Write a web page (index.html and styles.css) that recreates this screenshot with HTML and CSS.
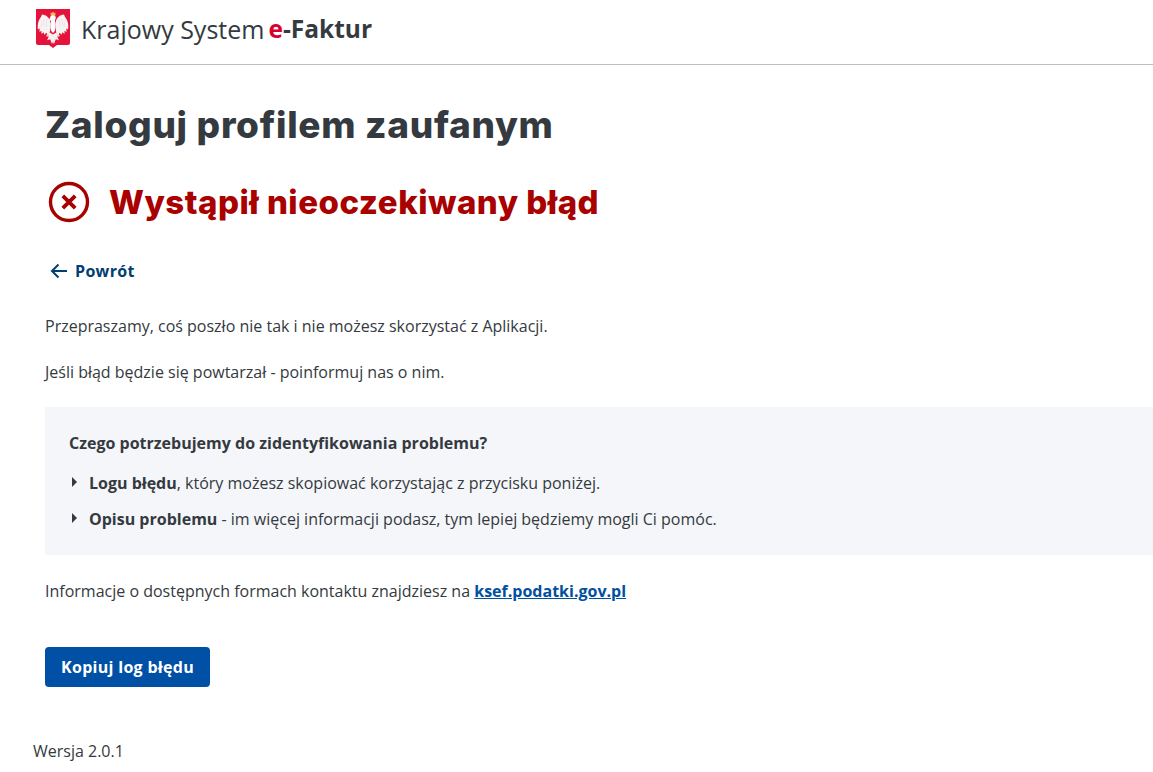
FILE: index.html
```html
<!DOCTYPE html>
<html lang="pl">
<head>
<meta charset="utf-8">
<title>Krajowy System e-Faktur</title>
<link rel="stylesheet" href="styles.css">
</head>
<body>
<header class="topbar">
  <svg class="emblem" width="34" height="40" viewBox="0 0 34 40" aria-hidden="true">
    <path d="M0 0h34v34q0 2-2 2H21l-4 3-4-3H2q-2 0-2-2z" fill="#e5123c"/>
    <path d="M14.800 3l1 1.200L17 2.500l1.200 1.700 1-1.200.3 3.500h-5z" fill="#efbe5a"/>
    <path d="M14.500 7.500c1-1.600 4-1.600 5 0 .6 1.200.2 2.600-.5 3.600V13c1 1.500 1 6-.2 9L17 24l-1.800-2c-1.200-3-1.200-7.500-.2-9v-1.400l-2.200.4c.2-1.600 1.200-3 1.700-4.500z" fill="#fff"/>
    <path d="M14.500 14C14 9 10 5.500 6 5.500 5.500 8 3 10 2.500 12.500c-.8 2.500-1 5.500-.6 8l1.800-1-.2 3.500 2-1.300V25l2.200-1.700.6 2.500 2.200-2 1 2 2.500-3.300z" fill="#f7f2f3"/>
    <path d="M19.500 14C20 9 24 5.500 28 5.500c.5 2.500 3 4.500 3.500 7 .8 2.500 1 5.500.6 8l-1.800-1 .2 3.500-2-1.300V25l-2.200-1.700-.6 2.500-2.200-2-1 2-2.500-3.300z" fill="#f7f2f3"/>
    <path d="M13 23l4 2.500 4-2.500 3 4-2.800.5 1.800 3.800-3.200-1L18 35l-1-2-1 2-1.800-4.700-3.200 1 1.800-3.800-2.800-.5z" fill="#f5eff0"/>
    <path d="M8.500 9.500L7 17M11 10.500L10 18M25.500 9.500L27 17M23 10.500l1 7.500M5.800 12.500L5 18M28.200 12.500l.8 5.500" stroke="#e2d6d9" stroke-width=".5" fill="none"/>
    <path d="M12.500 25.500l-1.500 2.500M21.500 25.500l1.500 2.500" stroke="#efbe5a" stroke-width=".8" fill="none"/>
  </svg>
  <div class="brand"><span class="brand-name">Krajowy System</span><span class="brand-bold"><span class="brand-e">e</span>-Faktur</span></div>
</header>
<main class="content">
  <h1 class="title">Zaloguj profilem zaufanym</h1>
  <div class="error">
    <svg class="error-icon" width="42" height="42" viewBox="0 0 42 42" aria-hidden="true">
      <circle cx="21" cy="21" r="18.500" fill="none" stroke="#a90000" stroke-width="3.400"/>
      <path d="M14.800 14.800l12.400 12.400M27.200 14.800L14.800 27.200" fill="none" stroke="#a90000" stroke-width="3.800"/>
    </svg>
    <h2 class="error-text">Wystąpił nieoczekiwany błąd</h2>
  </div>
  <a class="back" href="#">
    <svg width="18" height="16" viewBox="0 0 18 16" aria-hidden="true"><path d="M17 8H2M8.500 1.500L2 8l6.500 6.500" fill="none" stroke="#004070" stroke-width="2"/></svg>
    <span>Powrót</span>
  </a>
  <p class="para first">Przepraszamy, coś poszło nie tak i nie możesz skorzystać z Aplikacji.</p>
  <p class="para second">Jeśli błąd będzie się powtarzał - poinformuj nas o nim.</p>
  <section class="panel">
    <p class="panel-title">Czego potrzebujemy do zidentyfikowania problemu?</p>
    <ul class="list">
      <li class="item"><b>Logu błędu</b>, który możesz skopiować korzystając z przycisku poniżej.</li>
      <li class="item"><b>Opisu problemu</b> - im więcej informacji podasz, tym lepiej będziemy mogli Ci pomóc.</li>
    </ul>
  </section>
  <p class="para contact">Informacje o dostępnych formach kontaktu znajdziesz na <a class="link" href="#">ksef.podatki.gov.pl</a></p>
  <button class="copy" type="button">Kopiuj log błędu</button>
</main>
<footer class="version">Wersja 2.0.1</footer>
</body>
</html>
```
FILE: styles.css
```css
* { box-sizing: border-box; }
html, body { margin: 0; padding: 0; }
body {
  font-family: "Open Sans", sans-serif;
  font-size: 16px;
  line-height: 24px;
  color: #343a40;
  background: #fff;
  overflow-x: hidden;
}
.topbar {
  height: 65px;
  border-bottom: 1px solid #bdbdbd;
  display: flex;
  align-items: flex-start;
  padding: 9px 0 0 36px;
  gap: 11px;
}
.emblem { flex: none; }
.brand {
  font-size: 25px;
  line-height: 32px;
  margin-top: 4px;
  display: flex;
  gap: 4px;
}
.brand-bold { font-weight: 700; font-size: 24.5px; }
.brand-e { color: #d8002f; }
.content { padding: 0 0 0 45px; }
.title {
  margin: 35px 0 0;
  font-family: "Inter", sans-serif;
  font-weight: 800;
  font-size: 37px;
  letter-spacing: 0.7px;
  line-height: 50px;
  color: #343a40;
}
.error {
  display: flex;
  align-items: center;
  gap: 19px;
  margin-top: 31px;
  height: 42px;
}
.error-icon { flex: none; margin-left: 3px; }
.error-text {
  margin: 0;
  font-family: "Inter", sans-serif;
  font-weight: 800;
  font-size: 33px;
  letter-spacing: 0.5px;
  line-height: 42px;
  color: #a90000;
}
.back {
  display: flex;
  align-items: center;
  gap: 7px;
  margin: 36px 0 0 5px;
  font-weight: 700;
  letter-spacing: 0.33px;
  color: #004070;
  text-decoration: none;
}
.para { margin: 0; }
.first { margin-top: 31px; }
.second { margin-top: 22px; }
.panel {
  margin-top: 23px;
  height: 148px;
  padding: 24px 24px 0;
  background: #f5f6fa;
}
.panel-title { margin: 0; font-weight: 700; }
.list { list-style: none; margin: 16px 0 0; padding: 0; }
.item { position: relative; padding-left: 20px; }
.item + .item { margin-top: 12px; }
.item::before {
  content: "";
  position: absolute;
  left: 3px;
  top: 6px;
  border-left: 5px solid #343a40;
  border-top: 5px solid transparent;
  border-bottom: 5px solid transparent;
}
.contact { margin-top: 24px; }
.link { font-weight: 700; color: #00509f; }
.copy {
  display: block;
  margin-top: 44px;
  width: 165px;
  height: 40px;
  border: 0;
  border-radius: 4px;
  background: #0050a5;
  color: #fff;
  font: 700 16px/24px "Open Sans", sans-serif;
  letter-spacing: 0.3px;
}
.version { margin: 52px 0 0 33px; }
```
